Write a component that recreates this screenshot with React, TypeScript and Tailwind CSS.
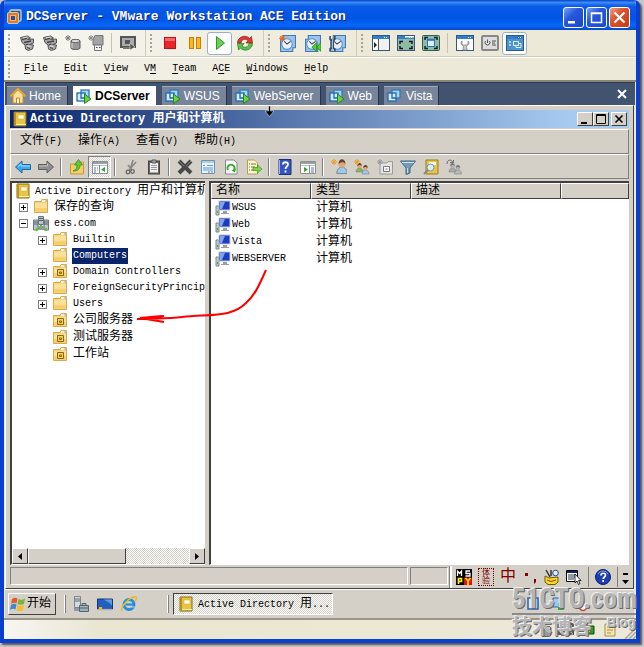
import React from "react";

type IconProps = { children: React.ReactNode; size?: string };

const Svg = ({ children, size = "w-4 h-4" }: IconProps) => (
  <svg viewBox="0 0 16 16" className={`${size} shrink-0`} aria-hidden="true">
    {children}
  </svg>
);

/* ---------- VMware icons ---------- */

const VmwareLogo = () => (
  <Svg>
    <rect x="4" y="1" width="11" height="11" rx="1.500" fill="#3d5a78" stroke="#9fb6cc" strokeWidth="1.800" />
    <rect x="1.500" y="3.500" width="11" height="11" rx="1.500" fill="#e8791e" stroke="#b9cbd9" />
    <rect x="4.500" y="6.500" width="5" height="5" fill="#2c4f9a" stroke="#f6b27a" />
  </Svg>
);

const Usb = () => (
  <Svg>
    <path d="M1.500 2.500l7-1.500 3 2-3 1.500 6-.5v4l-4 1.500 4 .5-1 4-4 1.500-3-1.500-.5-4-3-2.500z" fill="#a8a8a8" stroke="#555" />
    <path d="M3 4.500l5-1.200M5 7.500l7-1.500M6.500 10l3-1M8 12.500l3 1" stroke="#444" fill="none" strokeWidth="1.300" />
    <path d="M4 3l4-1M8 11l3.500.5" stroke="#e2e2e2" fill="none" />
  </Svg>
);

const Disk = () => (
  <Svg>
    <path d="M3 0v6M0 3h6M1 1l4 4M5 1L1 5" stroke="#777" />
    <path d="M6 6c0-2 9-2 9 0v7c0 2-9 2-9 0z" fill="#999" stroke="#555" />
    <ellipse cx="10.500" cy="6" rx="4.500" ry="1.600" fill="#ddd" stroke="#666" />
    <path d="M7 8v5" stroke="#ddd" />
  </Svg>
);

const Stick = () => (
  <Svg>
    <path d="M3 0v6M0 3h6M1 1l4 4M5 1L1 5" stroke="#888" />
    <path d="M7 .5h8v9.500H5V5z" fill="#a4a4a4" stroke="#777" />
    <path d="M6.500 10h7v5.500h-7z" fill="#f0f0f0" stroke="#777" />
    <path d="M8 12.500h1.500M11 12.500h1.500" stroke="#444" />
  </Svg>
);

const Snapshot = () => (
  <Svg>
    <rect x="1" y="2" width="14" height="10" fill="#aaa" stroke="#555" strokeWidth="2" />
    <path d="M5 5h5v4H5z" fill="#555" />
    <path d="M3 13h7" stroke="#777" strokeWidth="2" />
    <path d="M10 8v7l5-3z" fill="#555" stroke="#eee" strokeWidth="0.500" />
  </Svg>
);

const Stop = () => (
  <Svg>
    <rect x="2.500" y="2.500" width="11" height="11" fill="#e8262a" stroke="#c40f18" />
    <path d="M3 3h10v3H3z" fill="#f4686a" />
  </Svg>
);

const Pause = () => (
  <Svg>
    <rect x="2.500" y="2.500" width="4" height="11" fill="#fdb913" stroke="#c97b06" />
    <rect x="9.500" y="2.500" width="4" height="11" fill="#fdb913" stroke="#c97b06" />
  </Svg>
);

const Play = () => (
  <Svg>
    <path d="M4.500 1.500l8 6.500-8 6.500z" fill="#6fce52" stroke="#2a9a2c" />
  </Svg>
);

const Reset = () => (
  <Svg>
    <path d="M.5 8c0-6 8-9 12-4.500l2-2 1 6.500H9l2-2.500C8 3 4.500 4.500 4 8z" fill="#e03a34" stroke="#96140f" strokeWidth="0.700" />
    <path d="M15.500 8.500c0 6-8 9-12 4.500l-2 2-1-6.500H7L5 11c3 2.500 6.500 1 7-2.500z" fill="#5cc14a" stroke="#207a1c" strokeWidth="0.700" />
  </Svg>
);

const ClockBase = () => (
  <>
    <path d="M4 .5h11.500V12H13v3.500H1.500V4H4z" fill="#9cc3ec" stroke="#3f78b5" />
    <circle cx="7.500" cy="8.500" r="5" fill="#e8f2fb" stroke="#5e8cbc" />
    <path d="M5 6l2.500 2.500L11 6" fill="none" stroke="#446" />
  </>
);

const TakeSnap = () => (
  <Svg size="w-[17px] h-[17px]">
    <ClockBase />
    <path d="M3 0v6M0 3h6M1 1l4 4M5 1L1 5" stroke="#f2641e" />
  </Svg>
);

const RevertSnap = () => (
  <Svg size="w-[17px] h-[17px]">
    <ClockBase />
    <path d="M12 7v8.500L7.500 11.500zM16 7v8.500l-4-4z" fill="#5ac83c" stroke="#1f8a1c" strokeWidth="0.800" />
  </Svg>
);

const ManageSnap = () => (
  <Svg size="w-[17px] h-[17px]">
    <ClockBase />
    <path d="M1 1v3l2 1.500V12l-2 1v2.500M5.500 1v3L4 5.500V12l1.500 1v2.500" fill="none" stroke="#38495c" strokeWidth="1.500" />
    <path d="M3.300 4v9" stroke="#aab8c5" />
  </Svg>
);

const AppWindow = ({ children, fill = "#fff" }: { children?: React.ReactNode; fill?: string }) => (
  <svg viewBox="0 0 18 16" className="w-[18px] h-4 shrink-0" aria-hidden="true">
    <rect x="0.500" y="0.500" width="17" height="15" fill={fill} stroke="#34597e" />
    <path d="M1 1h16v3H1z" fill="#2f7fd0" />
    <path d="M12 2.500h1M14 2.500h1" stroke="#fff" />
    {children}
  </svg>
);

const SidebarView = () => (
  <AppWindow>
    <path d="M6.500 4v11" stroke="#555" />
    <path d="M2 7v6l3-3z" fill="#222" />
    <path d="M7 5h10v10H7z" fill="#f1f1f1" />
  </AppWindow>
);

const QuickSwitch = () => (
  <AppWindow fill="#8fbba4">
    <path d="M8 1h9v1.500H8z" fill="#fff" />
    <path d="M3 9V6.500h3M12 6.500h3V9M3 11v2.500h3M12 13.500h3V11" fill="none" stroke="#112" strokeWidth="1.400" />
  </AppWindow>
);

const FullScreen = () => (
  <svg viewBox="0 0 18 16" className="w-[18px] h-4 shrink-0" aria-hidden="true">
    <rect x="0.500" y="0.500" width="17" height="15" rx="1" fill="#8fbba4" stroke="#345b50" />
    <path d="M3 5V2.500h3M12 2.500h3V5M3 11v2.500h3M12 13.500h3V11" fill="none" stroke="#122" strokeWidth="1.500" />
    <rect x="5.500" y="4.500" width="7" height="7" fill="#dceefa" stroke="#2871c4" />
    <path d="M5 4.800h8" stroke="#2871c4" strokeWidth="2" />
  </svg>
);

const SettingsWin = () => (
  <AppWindow>
    <path d="M6 6c-2 2-1 4 1.500 5L7 15h4l-.5-4c2.500-1 3.500-3 1.500-5v3l-1.500 1h-3L6 9z" fill="#ccc" stroke="#888" strokeWidth="0.800" />
  </AppWindow>
);

const PowerWin = () => (
  <svg viewBox="0 0 18 16" className="w-[18px] h-4 shrink-0" aria-hidden="true">
    <rect x="1" y="1" width="16" height="14" rx="1" fill="#ddd" stroke="#888" strokeWidth="2" />
    <path d="M4.500 6a2.500 2.500 0 1 0 4 0M6.500 4.500V8M11 6h4M11 8h3M11 10h4" fill="none" stroke="#555" />
  </svg>
);

const UnityWin = () => (
  <AppWindow fill="#4b94cf">
    <path d="M3 7h2M3 10h2" stroke="#cfe6f8" strokeWidth="1.500" />
    <path d="M7.500 6.500h5v4h-5zM10 10.500v2h5v-4h-2.500" fill="none" stroke="#e4f1fb" />
  </AppWindow>
);

const HomeIcon = () => (
  <Svg>
    <path d="M3 7v8h10V7L8 2z" fill="#fbe3a0" stroke="#d98e20" />
    <path d="M0.500 8.500L8 1l7.500 7.500" fill="none" stroke="#eda52e" strokeWidth="2" />
    <path d="M6.500 15v-5h3v5" fill="#fff" stroke="#d07c14" />
  </Svg>
);

const VmIcon = ({ running = true }: { running?: boolean }) => (
  <Svg>
    <rect x="5" y="2" width="8" height="8" fill="#a8d4f6" stroke="#2c7ac0" strokeWidth="1.300" />
    <rect x="1" y="5" width="8" height="8" fill="#d7ecfb" stroke="#1c68b4" strokeWidth="1.300" />
    <path d="M5 5v5h4" fill="none" stroke="#1c68b4" strokeWidth="1.300" />
    {running && <path d="M8.500 6l6.500 5-6.500 4.500z" fill="#6bd046" stroke="#23891c" />}
  </Svg>
);

/* ---------- MMC icons ---------- */

const Book = () => (
  <Svg>
    <path d="M2 1h12v14H2z" fill="#e7c448" stroke="#8a6a14" />
    <path d="M2 1h2v14H2z" fill="#b98f1e" />
    <path d="M6 4h6v4H6z" fill="#fffbe2" stroke="#c9a637" strokeWidth="0.500" />
    <path d="M4 13.500h10" stroke="#fff3b0" />
  </Svg>
);

const Folder = ({ ou = false }: { ou?: boolean }) => (
  <Svg>
    <path d="M1.500 2.500h6.500l1-2h5.500v13h-13z" fill="#f6cf72" stroke="#d9a94c" />
    <path d="M9 2h4" stroke="#fff" strokeWidth="1.500" />
    <path d="M12 2h2" stroke="#7db4e4" />
    <path d="M2 4h12v5H2z" fill="#fbe09a" />
    {ou && <path d="M5.500 5.500h6v6h-6zM7.500 8h2v1.500h-2z" fill="#f5d260" stroke="#8a6714" />}
  </Svg>
);

const Domain = () => (
  <Svg>
    <path d="M5.500 .5h5v8h-5zM.5 4h4.500v10H.5zM11 4h4.500v10H11z" fill="#bcc4ca" stroke="#6c7880" />
    <path d="M6 2.500h4M1 6h4M11 6h4M1 8h4M11 8h4M6 4.500h4" stroke="#556069" />
    <path d="M5 10h6v4H5z" fill="#8f999f" />
    <path d="M3 12h2v3H3zM12 12h2v3h-2zM7 9h2v3H7z" fill="#50d028" />
  </Svg>
);

const Computer = () => (
  <Svg>
    <path d="M1 6h3v9H1z" fill="#c2c8cc" stroke="#7d858a" />
    <rect x="4" y="1" width="11" height="9" fill="#1a3cc0" stroke="#c4c8cc" />
    <path d="M6 2l4 0-3 7H5V2z" fill="#7ea2ee" />
    <path d="M8 11h4v2h2v1H6v-1h2z" fill="#999fa4" />
    <path d="M2 12h1" stroke="#35b31c" strokeWidth="2" />
  </Svg>
);

const Arrow = ({ back = false }: { back?: boolean }) =>
  back ? (
    <Svg>
      <path d="M0.500 8L7 2v3.500h8.500v5H7V14z" fill="#3fa9ea" stroke="#1a69a8" />
      <path d="M3 7.500L6 5v2h9" stroke="#a9defc" fill="none" />
    </Svg>
  ) : (
    <Svg>
      <path d="M15.500 8L9 2v3.500H.5v5H9V14z" fill="#8f8f8f" stroke="#5f5f5f" />
      <path d="M1 7h8.500V4.500" stroke="#c4c4c4" fill="none" />
    </Svg>
  );

const UpFolder = () => (
  <Svg>
    <path d="M1.500 5h5l1-2h7v12h-13z" fill="#f4cc6a" stroke="#c8983a" />
    <path d="M4 12c3-1 4-3 4-6H5.500l4-5.500 4 5.500H11c0 4-2 6-7 6z" fill="#5fca38" stroke="#2c8a18" strokeWidth="0.700" />
  </Svg>
);

const Pane = ({ children }: { children?: React.ReactNode }) => (
  <Svg>
    <path d="M.5 2.500h15v12H.5z" fill="#fff" stroke="#8a8f94" />
    <path d="M1 3h14v2H1z" fill="#9aa0a6" />
    <path d="M1 6.500h14" stroke="#bcc1c6" />
    {children}
  </Svg>
);

const TreePane = () => (
  <Pane>
    <path d="M7.500 6v8" stroke="#8a8f94" />
    <path d="M2 9h2M5 9h1M2 11h2M5 11h1M2 13h2" stroke="#557ba8" />
    <path d="M13 8v5l-4-2.500z" fill="#2faa26" />
  </Pane>
);

const ActionPane = () => (
  <Pane>
    <path d="M9.500 6v8" stroke="#8a8f94" />
    <path d="M11 9h3M11 11h3M11 13h3" stroke="#557ba8" />
    <path d="M4 8v5l4-2.500z" fill="#2faa26" />
  </Pane>
);

const Cut = () => (
  <Svg>
    <path d="M10 1L7 11M13 3L6 11M5 6l4 5" stroke="#888" strokeWidth="1.600" />
    <circle cx="5" cy="13" r="1.800" fill="none" stroke="#666" strokeWidth="1.300" />
    <circle cx="9.500" cy="12.500" r="1.800" fill="none" stroke="#666" strokeWidth="1.300" />
  </Svg>
);

const Paste = () => (
  <Svg>
    <rect x="2.500" y="2" width="11" height="13" fill="#666" stroke="#444" />
    <path d="M4 4h8v9.500H4z" fill="#f0f0f0" />
    <path d="M6 1h4v3H6z" fill="#aaa" stroke="#555" />
    <path d="M5 6.500h6M5 8.500h6M5 10.500h6" stroke="#999" />
  </Svg>
);

const Delete = () => (
  <Svg>
    <path d="M2 2l12 12M14 2L2 14" stroke="#484848" strokeWidth="4" />
    <path d="M2 2l5 5M14 2L9 7" stroke="#7a7a7a" />
  </Svg>
);

const Properties = () => (
  <Svg>
    <path d="M1.500 1.500h13v13h-13z" fill="#e9f4fc" stroke="#6c93b4" />
    <path d="M2 2h12v2H2z" fill="#b6cbdc" />
    <path d="M3 6.500h2M7 6.500h6M3 9h10M3 11h10" stroke="#5b9bd0" />
    <path d="M8 13h2M11 13h2" stroke="#777" />
  </Svg>
);

const Refresh = () => (
  <Svg>
    <path d="M2.500 1h8.500l3 3v11h-11.500z" fill="#fff" stroke="#888" />
    <path d="M5 11a3.500 3.500 0 1 1 6 0" fill="none" stroke="#36a928" strokeWidth="1.800" />
    <path d="M13 9.500l-1 4-3.500-2z" fill="#36a928" />
  </Svg>
);

const Export = () => (
  <Svg>
    <path d="M1.500 1h7l3 3v11h-10z" fill="#fff7d2" stroke="#b39d55" />
    <path d="M3 5h1M5 5h5M3 8h1M5 8h4M3 11h1M5 11h3" stroke="#807040" />
    <path d="M7 8.500h4.500V6L16 10l-4.500 4v-2.500H7z" fill="#7ed348" stroke="#3c9a20" strokeWidth="0.700" />
  </Svg>
);

const HelpBook = () => (
  <Svg>
    <path d="M2 .5h12v15H2z" fill="#3455bd" stroke="#1c2f7c" />
    <path d="M2.500 1v14" stroke="#9db2ef" />
    <path d="M6 5.500c0-3 5-3 5 0 0 2-2.500 1.800-2.500 4.500M8.500 11.500v2" fill="none" stroke="#fff" strokeWidth="1.800" />
  </Svg>
);

const Person = ({ x, y, body, hair = "#6a4020" }: { x: number; y: number; body: string; hair?: string }) => (
  <g transform={`translate(${x} ${y})`}>
    <path d="M0 9c0-3 2-4 3.500-4S7 6 7 9z" fill={body} stroke="#68767f" strokeWidth="0.500" />
    <circle cx="3.500" cy="3" r="2.300" fill="#dba877" />
    <path d="M1.200 3c0-4 4.600-4 4.600 0-1-1.500-3-1.500-4.600 0z" fill={hair} />
  </g>
);

const Spark = ({ color = "#f29a1c" }: { color?: string }) => (
  <path d="M3 0v6M0 3h6M1 1l4 4M5 1L1 5" stroke={color} />
);

const NewUser = () => (
  <Svg>
    <g transform="translate(-1 -3) scale(1.500 1.600)">
      <Person x={4.500} y={2} body="#9cc8ec" />
    </g>
    <Spark />
  </Svg>
);

const NewGroup = () => (
  <Svg>
    <Person x={2} y={4} body="#88b859" />
    <Person x={8} y={6} body="#9cc8ec" />
    <Spark />
  </Svg>
);

const NewOu = () => (
  <Svg>
    <path d="M3 4h7l1-1.500h4.500V15H3z" fill="#e4e4e4" stroke="#9a9a9a" />
    <path d="M6.500 7.500h6v5h-6zM8.500 10h2" fill="#fff" stroke="#777" />
    <Spark color="#999" />
  </Svg>
);

const Filter = () => (
  <Svg>
    <path d="M.5 2h15L10 9v5l-4 1.500V9z" fill="#6f9cbd" stroke="#44667f" />
    <path d="M2 3.500h12" stroke="#d4e6f2" />
    <path d="M7.500 9v5" stroke="#c4dcea" />
  </Svg>
);

const Find = () => (
  <Svg>
    <path d="M3 1h12v14H3z" fill="#e7c448" stroke="#9c7a18" />
    <path d="M6 3h7v3H6z" fill="#fffbe2" />
    <circle cx="7.500" cy="8.500" r="3.500" fill="#dcecf6" stroke="#7893a5" />
    <path d="M5 11l-4 4" stroke="#888" strokeWidth="2" />
  </Svg>
);

const AddMember = () => (
  <Svg>
    <path d="M1 5c0-5 5-5 6-1M7 4l-3-.5M7 4l.5-3" fill="none" stroke="#666" />
    <g filter="grayscale(1)">
      <Person x={3} y={4} body="#aaa" hair="#777" />
      <Person x={8.500} y={6} body="#bbb" hair="#777" />
    </g>
  </Svg>
);

/* ---------- taskbar icons ---------- */

const WinFlag = () => (
  <Svg>
    <path d="M2 3c2-1.500 4-1.500 5.500-.5L6.500 7.500C5 6.500 3 6.500 1 8z" fill="#e8582a" />
    <path d="M8.500 3c2 1 4 1 6.500-.5l-1 5.500c-2.500 1-4.500 1-6.500 0z" fill="#7bb53c" />
    <path d="M1 9c2-1.500 4-1.500 5.500-.5l-1 5C4 12.500 2 12.500 0 14z" fill="#3f86d4" />
    <path d="M7.500 9c2 1 4 1 6.500 0l-1 5.500c-2.500 1-4.500 1-6.500 0z" fill="#f6bd2c" />
  </Svg>
);

const ServerManager = () => (
  <Svg>
    <path d="M1.500.5h6v11h-6z" fill="#d5dade" stroke="#7b868f" />
    <path d="M2 3h5M2 5h5" stroke="#5d6a73" />
    <path d="M1 12h6v3H1z" fill="#8d9aa5" />
    <path d="M6.500 9.500h9v6h-9zM9 9V7.500h4V9M7 12h8" fill="#9fb0bd" stroke="#56656f" />
  </Svg>
);

const Desktop = () => (
  <Svg>
    <path d="M.5 3h15v10H.5z" fill="#2360bd" stroke="#16366e" />
    <path d="M7 3.500h8v6c-3-4-6-4-8-6z" fill="#5f9ae6" />
    <path d="M1 13.500h14" stroke="#a8b4c4" strokeWidth="1.500" />
    <path d="M2 11h3v3H2z" fill="#f3b63a" />
  </Svg>
);

const Explorer = () => (
  <Svg>
    <circle cx="8" cy="8.500" r="5" fill="none" stroke="#2290dc" strokeWidth="3" />
    <path d="M5 8.500h8" stroke="#2290dc" strokeWidth="2.200" />
    <path d="M10 10.500h5v1h-5z" fill="#d4d0c8" />
    <path d="M1 15C-1 11 9 0 15 1c1 1 0 3-1 4" fill="none" stroke="#f1b81f" strokeWidth="1.500" />
  </Svg>
);

const Lang = () => (
  <Svg>
    <path d="M0 0h16v16H0z" fill="#000" />
    <path d="M1.500 7V2l2 2.500L5.500 2v5M14 2h-4v2.500h4V7h-4.500" fill="none" stroke="#fff" strokeWidth="1.300" />
    <path d="M2.500 15V9.500h3v3h-3" fill="none" stroke="#fff200" strokeWidth="1.700" />
    <path d="M8 8.500h8V16H8z" fill="#e01010" />
    <path d="M9.500 9l2.500 3 2.500-3M12 12v4" fill="none" stroke="#fff200" strokeWidth="1.500" />
  </Svg>
);

const Punct = () => (
  <Svg>
    <path d="M3 4h3v3H3zM12 10h2v3l-2 2z" fill="#800000" />
  </Svg>
);

const Tools = () => (
  <Svg>
    <path d="M1 7l4 2 9-1v5l-3 2.500H4L1 13z" fill="#f6da2c" stroke="#6e5a00" />
    <path d="M2 1l4 7M7 1v6" stroke="#333" strokeWidth="1.500" />
    <circle cx="11.500" cy="4" r="2.800" fill="#e2edfa" stroke="#26458c" />
    <path d="M3 11l4 1.500 5-1.500" fill="none" stroke="#a30" />
  </Svg>
);

const MenuList = () => (
  <Svg>
    <path d="M.5 1.500h11v11H.5z" fill="#fff" stroke="#000" />
    <path d="M1 3h10" stroke="#10246a" strokeWidth="2" />
    <path d="M2 6h8M2 8h8M2 10h6" stroke="#234" />
    <path d="M9 5v9l2-2 1.500 3.500 1.500-1-1.500-3H15z" fill="#fff" stroke="#000" strokeWidth="0.800" />
  </Svg>
);

const HelpRound = () => (
  <Svg>
    <circle cx="8" cy="8" r="7.500" fill="#1c3fb4" stroke="#0b2064" />
    <path d="M3 5c2-4 8-4 10 0" stroke="#8ba8f4" fill="none" />
    <path d="M6 6.500c0-3 4.500-3 4.500 0 0 1.500-2.300 1.500-2.300 3.500M8.200 11v2" fill="none" stroke="#fff" strokeWidth="1.700" />
  </Svg>
);

/* ---------- shared bits ---------- */

const raised = "border border-t-white border-l-white border-r-[#404040] border-b-[#404040] bg-[#d4d0c8]";
const sunken = "border border-t-[#808080] border-l-[#808080] border-r-white border-b-white";
const dither = "bg-[repeating-conic-gradient(#ffffff_0_25%,#d4d0c8_0_50%)] bg-[length:2px_2px]";

// latin runs are set smaller than the chinese ones, as in a bitmap song face
const Cn = ({ children }: { children: React.ReactNode }) => (
  <span className="text-[12px]">{children}</span>
);

type Tool = { label: string; icon: React.ReactNode; on?: boolean } | null;

const Grip = () => (
  <div className="w-[11px] pl-1 shrink-0">
    <div className="w-[2px] h-[18px] bg-[repeating-linear-gradient(#a6a498_0_2px,transparent_2px_4px)]" />
  </div>
);

const vmTools: { width: string; items: Tool[] }[] = [
  {
    width: "w-[23px]",
    items: [
      { label: "USB device 1", icon: <Usb /> },
      { label: "USB device 2", icon: <Usb /> },
      { label: "Hard disk", icon: <Disk /> },
      { label: "Removable device", icon: <Stick /> },
      null,
      { label: "Capture", icon: <Snapshot /> },
    ],
  },
  {
    width: "w-[25px]",
    items: [
      { label: "Power off", icon: <Stop /> },
      { label: "Suspend", icon: <Pause /> },
      { label: "Power on", icon: <Play />, on: true },
      { label: "Reset", icon: <Reset /> },
    ],
  },
  {
    width: "w-[25px]",
    items: [
      { label: "Take snapshot", icon: <TakeSnap /> },
      { label: "Revert snapshot", icon: <RevertSnap /> },
      { label: "Manage snapshots", icon: <ManageSnap /> },
    ],
  },
  {
    width: "w-[25px]",
    items: [
      { label: "Show sidebar", icon: <SidebarView /> },
      { label: "Quick switch", icon: <QuickSwitch /> },
      { label: "Full screen", icon: <FullScreen /> },
      null,
      { label: "Settings", icon: <SettingsWin /> },
      { label: "Appliance view", icon: <PowerWin /> },
      { label: "Console view", icon: <UnityWin />, on: true },
    ],
  },
];

// [before, accelerator, after]
const vmMenu = [
  ["", "F", "ile"],
  ["", "E", "dit"],
  ["", "V", "iew"],
  ["V", "M", ""],
  ["", "T", "eam"],
  ["A", "C", "E"],
  ["", "W", "indows"],
  ["", "H", "elp"],
];

const tabs = [
  { name: "Home", icon: <HomeIcon /> },
  { name: "DCServer", icon: <VmIcon />, active: true },
  { name: "WSUS", icon: <VmIcon /> },
  { name: "WebServer", icon: <VmIcon /> },
  { name: "Web", icon: <VmIcon /> },
  { name: "Vista", icon: <VmIcon running={false} /> },
];

const mmcMenu = [
  ["文件", "(F)"],
  ["操作", "(A)"],
  ["查看", "(V)"],
  ["帮助", "(H)"],
];

const mmcTools: Tool[] = [
  { label: "后退", icon: <Arrow back /> },
  { label: "前进", icon: <Arrow /> },
  null,
  { label: "向上", icon: <UpFolder /> },
  { label: "控制台树", icon: <TreePane />, on: true },
  null,
  { label: "剪切", icon: <Cut /> },
  { label: "粘贴", icon: <Paste /> },
  null,
  { label: "删除", icon: <Delete /> },
  { label: "属性", icon: <Properties /> },
  { label: "刷新", icon: <Refresh /> },
  { label: "导出列表", icon: <Export /> },
  null,
  { label: "帮助", icon: <HelpBook /> },
  { label: "操作窗格", icon: <ActionPane /> },
  null,
  { label: "新建用户", icon: <NewUser /> },
  { label: "新建组", icon: <NewGroup /> },
  { label: "新建组织单位", icon: <NewOu /> },
  { label: "筛选器", icon: <Filter /> },
  { label: "查找", icon: <Find /> },
  { label: "添加到组", icon: <AddMember /> },
];

type Node = { name: string; cn?: boolean; ou?: boolean; sign?: string; selected?: boolean };

const children: Node[] = [
  { name: "Builtin", sign: "+" },
  { name: "Computers", selected: true },
  { name: "Domain Controllers", sign: "+", ou: true },
  { name: "ForeignSecurityPrincip", sign: "+" },
  { name: "Users", sign: "+" },
  { name: "公司服务器", cn: true, ou: true },
  { name: "测试服务器", cn: true, ou: true },
  { name: "工作站", cn: true, ou: true },
];

const computers = ["WSUS", "Web", "Vista", "WEBSERVER"];

const Expander = ({ sign }: { sign?: string }) =>
  sign ? (
    <button aria-label={sign === "+" ? "展开" : "折叠"} className="w-[9px] h-[9px] shrink-0 border border-[#808080] bg-white">
      <svg viewBox="0 0 7 7" className="w-[7px] h-[7px] block">
        <path d={sign === "+" ? "M1 3.500h5M3.500 1v5" : "M1 3.500h5"} stroke="#000" />
      </svg>
    </button>
  ) : (
    <span className="w-[9px] shrink-0" />
  );

/* ---------- sections ---------- */

const TitleBar = () => (
  <div className="h-[30px] shrink-0 flex items-center gap-1 pl-[2px] pr-1.5 pt-1 bg-[linear-gradient(#0a3fc4_0%,#3a8cf8_8%,#0a5ce8_20%,#0054e3_60%,#0866fb_85%,#0349c4_100%)]">
    <VmwareLogo />
    <h1 className="flex-1 text-[13px] font-bold text-white whitespace-pre [text-shadow:1px_1px_#0a1f7a]">
      DCServer - VMware Workstation ACE Edition
    </h1>
    <div className="flex gap-[2px]">
      <button aria-label="Minimize" className="w-[21px] h-[21px] rounded-[3px] border border-white bg-[linear-gradient(135deg,#7ba1f5,#2558dc_40%,#1c48c8)]">
        <svg viewBox="0 0 19 19" className="block">
          <path d="M4 13h7v2.500H4z" fill="#fff" />
        </svg>
      </button>
      <button aria-label="Maximize" className="w-[21px] h-[21px] rounded-[3px] border border-white bg-[linear-gradient(135deg,#7ba1f5,#2558dc_40%,#1c48c8)]">
        <svg viewBox="0 0 19 19" className="block">
          <path d="M4.500 5h10v9.500h-10zM4 5.500h11" fill="none" stroke="#fff" strokeWidth="1.500" />
        </svg>
      </button>
      <button aria-label="Close" className="w-[21px] h-[21px] rounded-[3px] border border-white bg-[linear-gradient(135deg,#f0a088,#e0532c_40%,#c43a12)]">
        <svg viewBox="0 0 19 19" className="block">
          <path d="M4.500 4.500l10 10M14.500 4.500l-10 10" stroke="#fff" strokeWidth="2.200" />
        </svg>
      </button>
    </div>
  </div>
);

const VmToolbar = () => (
  <div className="h-[27px] shrink-0 flex border-b border-[#cfccba] bg-[linear-gradient(90deg,#f7f6f1,#ece9d8_60%)]">
    {vmTools.map((group, i) => (
      <div key={i} className={`flex items-center ${i < 3 ? "pr-1.5 border-r border-[#cfccba]" : ""}`}>
        <Grip />
        {group.items.map((t, j) =>
          t ? (
            <button
              key={j}
              aria-label={t.label}
              className={`${group.width} h-[23px] flex items-center justify-center rounded-[3px] ${
                t.on ? "bg-white border border-[#98b0c8]" : ""
              }`}
            >
              {t.icon}
            </button>
          ) : (
            <div key={j} className="w-px h-5 mx-1 bg-[#c5c2b0]" />
          )
        )}
      </div>
    ))}
  </div>
);

const VmMenu = () => (
  <div className="h-[25px] shrink-0 flex items-center border-t border-t-white border-b-2 border-b-[#8a8778] bg-[linear-gradient(90deg,#f4f3ec,#ece9d8_60%)]">
    <Grip />
    <nav className="flex gap-4 pl-[9px]">
      {vmMenu.map(([a, key, b]) => (
        <button key={a + key + b}>
          {a}
          <span className="underline underline-offset-2">{key}</span>
          {b}
        </button>
      ))}
    </nav>
  </div>
);

const Tabs = () => (
  <div className="h-[23px] shrink-0 flex items-end bg-[#425370] pl-[2px] mx-px border-t border-[#2c3a52]">
    <div role="tablist" className="flex gap-1.5 font-[Liberation_Sans,sans-serif] text-[12px] leading-4">
      {tabs.map((tab) => (
        <button
          key={tab.name}
          role="tab"
          aria-selected={!!tab.active}
          className={`h-[19px] flex items-center gap-[3px] pl-[3px] pr-1.5 ${
            tab.active
              ? "bg-white font-bold text-black"
              : "bg-[#77849a] text-white border-t border-t-[#a0abbc] shadow-[1px_0_#26324a]"
          }`}
        >
          {tab.icon}
          {tab.name}
        </button>
      ))}
    </div>
    <button aria-label="Close tab" className="ml-auto mr-2 mb-1.5">
      <svg viewBox="0 0 10 10" className="w-[10px] h-[10px]">
        <path d="M1 1l8 8M9 1L1 9" stroke="#fff" strokeWidth="2" />
      </svg>
    </button>
  </div>
);

const Tree = () => (
  <div className="w-[195px] shrink-0 flex flex-col bg-white border-t-2 border-l-2 border-[#404040] border-b border-b-white">
    <ul className="flex-1 overflow-hidden whitespace-nowrap">
      <li className="h-4 flex items-center gap-1 pl-[3px]">
        <Book />
        <span className="leading-4">
          Active Directory <Cn>用户和计算机</Cn>
        </span>
      </li>
      <li className="h-4 flex items-center gap-[5px] pl-[7px]">
        <Expander sign="+" />
        <Folder />
        <Cn>保存的查询</Cn>
      </li>
      <li>
        <div className="h-[17px] flex items-center gap-[5px] pl-[7px]">
          <Expander sign="-" />
          <Domain />
          ess.com
        </div>
        <ul>
          {children.map((n) => (
            <li key={n.name} className={`${n.cn ? "h-[17px]" : "h-4"} flex items-center pl-[26px]`}>
              <Expander sign={n.sign} />
              <span className="pl-[5px] pr-1">
                <Folder ou={n.ou} />
              </span>
              <span className={`px-px leading-4 ${n.selected ? "bg-[#0a246a] text-white" : ""}`}>
                {n.cn ? <Cn>{n.name}</Cn> : n.name}
              </span>
            </li>
          ))}
        </ul>
      </li>
    </ul>
    <div className={`h-4 flex shrink-0 ${dither}`}>
      <button aria-label="向左滚动" className={`w-4 flex items-center justify-center ${raised}`}>
        <svg viewBox="0 0 4 7" className="w-1 h-[7px]">
          <path d="M4 0v7L0 3.500z" />
        </svg>
      </button>
      <div className={`w-[98px] ${raised}`} />
      <button aria-label="向右滚动" className={`w-4 ml-auto flex items-center justify-center ${raised}`}>
        <svg viewBox="0 0 4 7" className="w-1 h-[7px]">
          <path d="M0 0v7l4-3.500z" />
        </svg>
      </button>
    </div>
  </div>
);

const List = () => (
  <div className="flex-1 min-w-0 bg-white border-t-2 border-l-2 border-[#404040] border-b border-b-white">
    <table className="w-full table-fixed border-separate border-spacing-0 text-left">
      <colgroup>
        <col className="w-[100px]" />
        <col className="w-[100px]" />
        <col className="w-[150px]" />
        <col />
      </colgroup>
      <thead>
        <tr className="text-[12px] leading-[14px]">
          {["名称", "类型", "描述", ""].map((h) => (
            <th key={h} className={`h-[15px] p-0 pl-1 font-normal ${raised}`}>
              {h}
            </th>
          ))}
        </tr>
      </thead>
      <tbody>
        {computers.map((c) => (
          <tr key={c}>
            <td className="p-0 h-[17px] pl-1">
              <div className="flex items-center gap-px leading-4">
                <Computer />
                {c}
              </div>
            </td>
            <td className="p-0 pl-[5px] text-[12px] leading-4">计算机</td>
            <td />
            <td />
          </tr>
        ))}
      </tbody>
    </table>
  </div>
);

const LanguageBar = () => (
  <div className="flex items-center gap-1.5 pl-1 border-l-2 border-white shadow-[-1px_0_#808080] text-[#800000]">
    <button aria-label="MSPY">
      <Lang />
    </button>
    <button className="w-4 text-[8px] leading-2 border border-dotted border-[#800000] text-center">
      体
      <br />验
    </button>
    <button className="w-4 text-[16px] leading-4">中</button>
    <button aria-label="标点">
      <Punct />
    </button>
    <button aria-label="工具">
      <Tools />
    </button>
    <button aria-label="菜单">
      <MenuList />
    </button>
    <div className="w-px h-5 bg-[#808080]" />
    <button aria-label="帮助">
      <HelpRound />
    </button>
    <button aria-label="选项" className="pl-1 border-l border-[#808080]">
      <svg viewBox="0 0 7 20" className="w-[7px] h-5">
        <path d="M1 6h5v2H1zM0 13h7l-3.500 4z" />
      </svg>
    </button>
  </div>
);

const MmcWindow = () => (
  <section className="flex-1 flex flex-col p-1 pb-0 bg-[#d4d0c8] border border-t-white border-l-white border-r-[#404040] border-b-[#404040]">
    <header className="h-[18px] shrink-0 flex items-center gap-[2px] pl-[2px] pr-[2px] bg-[linear-gradient(90deg,#0a246a,#a6caf0_90%)] text-white font-bold">
      <Book />
      <h2 className="flex-1 text-[12px] leading-4 whitespace-nowrap">
        Active Directory 用户和计算机
      </h2>
      <div className="flex">
        <button aria-label="最小化" className={`w-4 h-[14px] ${raised}`}>
          <svg viewBox="0 0 14 12" className="block">
            <path d="M3 9h6v2H3z" />
          </svg>
        </button>
        <button aria-label="最大化" className={`w-4 h-[14px] mr-[2px] ${raised}`}>
          <svg viewBox="0 0 14 12" className="block">
            <path d="M2.500 1.500h9v9h-9zM2 2.500h10" fill="none" stroke="#000" />
          </svg>
        </button>
        <button aria-label="关闭" className={`w-4 h-[14px] ${raised}`}>
          <svg viewBox="0 0 14 12" className="block">
            <path d="M3.500 2.500l7 7M10.500 2.500l-7 7" stroke="#000" strokeWidth="1.600" />
          </svg>
        </button>
      </div>
    </header>
    <nav className="mt-px h-[25px] shrink-0 flex items-center gap-4 pl-[9px] border border-t-white border-l-white border-r-[#808080] border-b-[#808080]">
      {mmcMenu.map(([cn, key]) => (
        <button key={cn} className="leading-5">
          <Cn>{cn}</Cn>
          {key}
        </button>
      ))}
    </nav>
    <div className="h-[25px] shrink-0 flex items-center border border-t-white border-l-white border-r-[#808080] border-b-[#808080]">
      {mmcTools.map((t, i) =>
        t ? (
          <button
            key={i}
            aria-label={t.label}
            className={`w-[23px] h-[22px] flex items-center justify-center ${t.on ? `${sunken} ${dither}` : ""}`}
          >
            {t.icon}
          </button>
        ) : (
          <div key={i} className="w-[2px] h-[18px] mx-[3px] bg-[#808080] border-r border-white" />
        )
      )}
    </div>
    <div className="flex-1 flex gap-1 mt-[2px] min-h-[200px]">
      <Tree />
      <List />
    </div>
    <div className="h-[22px] mt-px shrink-0 flex gap-[2px]">
      <div className={`flex-1 h-[18px] mt-px ${sunken}`} />
      <div className={`w-[38px] h-[18px] mt-px ${sunken}`} />
      <LanguageBar />
    </div>
  </section>
);

const Taskbar = () => (
  <div className="h-[29px] shrink-0 flex items-center pl-[3px] bg-[#d4d0c8] border-t border-white">
    <button className={`h-[22px] w-12 flex items-center gap-px pl-px ${raised}`}>
      <WinFlag />
      <Cn>开始</Cn>
    </button>
    <div className="w-[2px] h-[18px] ml-2 bg-white border-r border-[#808080]" />
    <div className="flex gap-2 ml-[7px]">
      <button aria-label="服务器管理器">
        <ServerManager />
      </button>
      <button aria-label="显示桌面">
        <Desktop />
      </button>
      <button aria-label="Internet Explorer">
        <Explorer />
      </button>
    </div>
    <div className="w-[2px] h-[18px] ml-[30px] bg-white border-r border-[#808080]" />
    <button
      className={`h-[22px] w-40 ml-1 flex items-center gap-1 pl-1 border border-t-[#404040] border-l-[#404040] border-r-white border-b-white whitespace-nowrap ${dither}`}
    >
      <Book />
      <span>
        Active Directory <Cn>用</Cn>...
      </span>
    </button>
    <div className="flex gap-2 ml-auto mr-11">
      <Svg>
        <path d="M2 2h10v11H2z" fill="#dfe9f4" stroke="#2a62ac" strokeWidth="1.500" />
      </Svg>
      <Svg>
        <path d="M3 2h9v9H3z" fill="#9ccbf2" stroke="#2a62ac" />
        <path d="M8 7h6v7H8z" fill="#38a838" />
      </Svg>
      <Svg>
        <path d="M2 6h4l4-4v12l-4-4H2z" fill="#c9c9c9" stroke="#888" />
        <circle cx="9" cy="11" r="3.500" fill="#fff" stroke="#d43a30" strokeWidth="1.500" />
      </Svg>
    </div>
  </div>
);

const VmStatus = () => (
  <div className="h-[21px] shrink-0 flex items-center justify-end gap-1.5 border-t-2 border-t-[#9a9788] bg-[linear-gradient(90deg,#f7f6f1,#e9e6d3_15%,#ece9d8)]">
    <Disk />
    <Snapshot />
    <Svg>
      <path d="M2 4h12v8H2z" fill="#2f9a2a" stroke="#124f10" />
      <path d="M6 6h4v4H6z" fill="#f4d21c" />
    </Svg>
    <Svg>
      <path d="M3 2h10v12H3z" fill="#f3e6a8" stroke="#a69454" />
      <path d="M5 5h6M5 8h6M5 11h4" stroke="#a69454" />
    </Svg>
    <svg viewBox="0 0 12 12" className="w-3 h-3 self-end" aria-hidden="true">
      <path d="M1 12L12 1M5 12l7-7M9 12l3-3" stroke="#a8a594" strokeWidth="1.500" />
    </svg>
  </div>
);

const Watermark = () => (
  <div className="absolute right-2 bottom-1 w-[124px] font-bold text-[#b4b4b4] pointer-events-none [text-shadow:-1px_-1px_#f0f0f0,1px_1px_#6a6a6a]">
    <div className="text-[27px] leading-7 border-b-2 border-[#8a8a8a] font-[Liberation_Sans_Narrow,Roboto_Condensed,Liberation_Sans,sans-serif]">
      51CTO.com
    </div>
    <div className="flex items-start justify-between">
      <span className="text-[20px] leading-7">技术博客</span>
      <span className="text-[13px] leading-4 font-[Liberation_Sans,sans-serif]">Blog</span>
    </div>
  </div>
);

export default function App() {
  return (
    <div className="relative min-h-screen flex flex-col pr-1 pb-1 bg-[#c8c8cc] text-[10px] leading-4 text-black font-[Liberation_Mono,Noto_Sans_CJK_SC,monospace]">
      <main className="flex-1 flex flex-col rounded-t-[6px] overflow-hidden border-4 border-t-0 border-[#0a3fd0] bg-[#ece9d8] shadow-[2px_2px_2px_#555555]">
        <TitleBar />
        <VmToolbar />
        <VmMenu />
        <Tabs />
        <div className="flex-1 flex flex-col ml-px mr-[2px]">
          <MmcWindow />
          <Taskbar />
        </div>
        <VmStatus />
      </main>
      {/* hand drawn arrow from the computer to its new unit */}
      <svg viewBox="0 0 140 60" className="absolute left-[132px] top-[266px] w-[140px] h-[60px] pointer-events-none">
        <path
          d="M134 4C126 22 122 30 114 37C100 51 82 48 50 51C36 53 22 52 5 53M30 50L8 52L32 56M22 51l10-1"
          fill="none"
          stroke="#ff0000"
          strokeWidth="2"
        />
      </svg>
      <svg viewBox="0 0 9 11" className="absolute left-[265px] top-[106px] w-[9px] h-[11px] pointer-events-none">
        <path d="M3.500 0h2v5h3.500L4.500 10.500 0 5h3.500z" stroke="#fff" strokeWidth="0.500" />
      </svg>
      <Watermark />
    </div>
  );
}
